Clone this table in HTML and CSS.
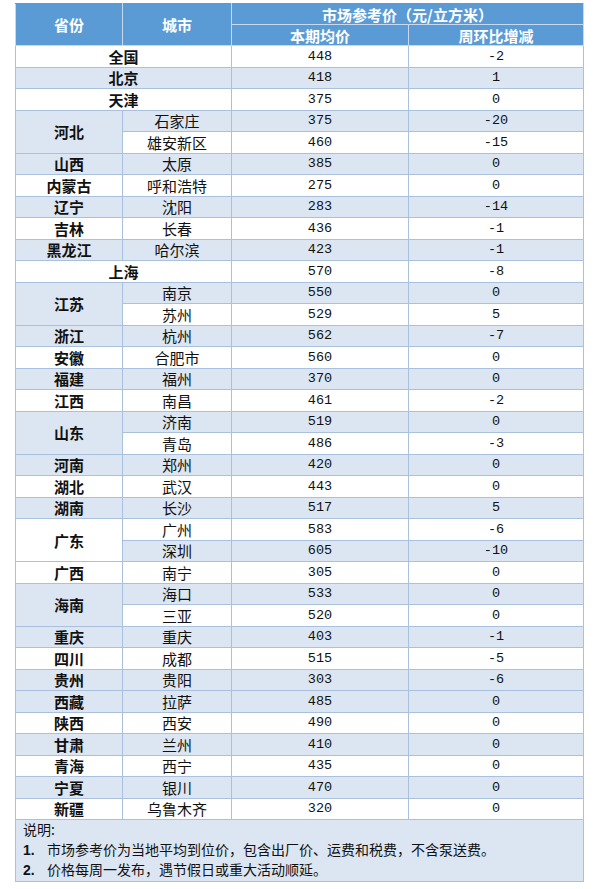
FILE: index.html
```html
<!DOCTYPE html>
<html lang="zh-CN">
<head>
<meta charset="utf-8">
<title>市场参考价</title>
<link rel="stylesheet" href="styles.css">
</head>
<body>
<div class="wrap">
<table class="price">
  <colgroup>
    <col class="c-prov"><col class="c-city"><col class="c-price"><col class="c-chg">
  </colgroup>
  <thead>
    <tr class="h1">
      <th rowspan="2">省份</th>
      <th rowspan="2">城市</th>
      <th colspan="2" class="h-group">市场参考价（元/立方米）</th>
    </tr>
    <tr class="h2">
      <th>本期均价</th>
      <th>周环比增减</th>
    </tr>
  </thead>
  <tbody>
    <tr class="w"><td class="prov" colspan="2">全国</td><td class="num">448</td><td class="num">-2</td></tr>
    <tr class="b"><td class="prov" colspan="2">北京</td><td class="num">418</td><td class="num">1</td></tr>
    <tr class="w"><td class="prov" colspan="2">天津</td><td class="num">375</td><td class="num">0</td></tr>
    <tr class="b"><td class="prov" rowspan="2">河北</td><td class="city">石家庄</td><td class="num">375</td><td class="num">-20</td></tr>
    <tr class="w"><td class="city">雄安新区</td><td class="num">460</td><td class="num">-15</td></tr>
    <tr class="b"><td class="prov">山西</td><td class="city">太原</td><td class="num">385</td><td class="num">0</td></tr>
    <tr class="w"><td class="prov">内蒙古</td><td class="city">呼和浩特</td><td class="num">275</td><td class="num">0</td></tr>
    <tr class="b"><td class="prov">辽宁</td><td class="city">沈阳</td><td class="num">283</td><td class="num">-14</td></tr>
    <tr class="w"><td class="prov">吉林</td><td class="city">长春</td><td class="num">436</td><td class="num">-1</td></tr>
    <tr class="b"><td class="prov">黑龙江</td><td class="city">哈尔滨</td><td class="num">423</td><td class="num">-1</td></tr>
    <tr class="w"><td class="prov" colspan="2">上海</td><td class="num">570</td><td class="num">-8</td></tr>
    <tr class="b"><td class="prov" rowspan="2">江苏</td><td class="city">南京</td><td class="num">550</td><td class="num">0</td></tr>
    <tr class="w"><td class="city">苏州</td><td class="num">529</td><td class="num">5</td></tr>
    <tr class="b"><td class="prov">浙江</td><td class="city">杭州</td><td class="num">562</td><td class="num">-7</td></tr>
    <tr class="w"><td class="prov">安徽</td><td class="city">合肥市</td><td class="num">560</td><td class="num">0</td></tr>
    <tr class="b"><td class="prov">福建</td><td class="city">福州</td><td class="num">370</td><td class="num">0</td></tr>
    <tr class="w"><td class="prov">江西</td><td class="city">南昌</td><td class="num">461</td><td class="num">-2</td></tr>
    <tr class="b"><td class="prov" rowspan="2">山东</td><td class="city">济南</td><td class="num">519</td><td class="num">0</td></tr>
    <tr class="w"><td class="city">青岛</td><td class="num">486</td><td class="num">-3</td></tr>
    <tr class="b"><td class="prov">河南</td><td class="city">郑州</td><td class="num">420</td><td class="num">0</td></tr>
    <tr class="w"><td class="prov">湖北</td><td class="city">武汉</td><td class="num">443</td><td class="num">0</td></tr>
    <tr class="b"><td class="prov">湖南</td><td class="city">长沙</td><td class="num">517</td><td class="num">5</td></tr>
    <tr class="w"><td class="prov" rowspan="2">广东</td><td class="city">广州</td><td class="num">583</td><td class="num">-6</td></tr>
    <tr class="b"><td class="city">深圳</td><td class="num">605</td><td class="num">-10</td></tr>
    <tr class="w"><td class="prov">广西</td><td class="city">南宁</td><td class="num">305</td><td class="num">0</td></tr>
    <tr class="b"><td class="prov" rowspan="2">海南</td><td class="city">海口</td><td class="num">533</td><td class="num">0</td></tr>
    <tr class="w"><td class="city">三亚</td><td class="num">520</td><td class="num">0</td></tr>
    <tr class="b"><td class="prov">重庆</td><td class="city">重庆</td><td class="num">403</td><td class="num">-1</td></tr>
    <tr class="w"><td class="prov">四川</td><td class="city">成都</td><td class="num">515</td><td class="num">-5</td></tr>
    <tr class="b"><td class="prov">贵州</td><td class="city">贵阳</td><td class="num">303</td><td class="num">-6</td></tr>
    <tr class="b"><td class="prov">西藏</td><td class="city">拉萨</td><td class="num">485</td><td class="num">0</td></tr>
    <tr class="w"><td class="prov">陕西</td><td class="city">西安</td><td class="num">490</td><td class="num">0</td></tr>
    <tr class="b"><td class="prov">甘肃</td><td class="city">兰州</td><td class="num">410</td><td class="num">0</td></tr>
    <tr class="w"><td class="prov">青海</td><td class="city">西宁</td><td class="num">435</td><td class="num">0</td></tr>
    <tr class="b"><td class="prov">宁夏</td><td class="city">银川</td><td class="num">470</td><td class="num">0</td></tr>
    <tr class="w"><td class="prov">新疆</td><td class="city">乌鲁木齐</td><td class="num">320</td><td class="num">0</td></tr>
  </tbody>
  <tfoot>
    <tr class="note">
      <td colspan="4">
        <div class="note-line">说明:</div>
        <div class="note-line"><span class="idx">1.</span>市场参考价为当地平均到位价，包含出厂价、运费和税费，不含泵送费。</div>
        <div class="note-line"><span class="idx">2.</span>价格每周一发布，遇节假日或重大活动顺延。</div>
      </td>
    </tr>
  </tfoot>
</table>
</div>
</body>
</html>
```
FILE: styles.css
```css
html, body {
  margin: 0;
  padding: 0;
  background: #ffffff;
}

.wrap {
  padding: 3px 0 0 15px;
}

.price {
  border-collapse: collapse;
  table-layout: fixed;
  width: 568px;
  font-family: "Noto Sans CJK SC", "Liberation Sans", sans-serif;
  font-size: 15px;
  color: #111111;
}

.c-prov { width: 107px; }
.c-city { width: 109px; }
.c-price { width: 177px; }
.c-chg { width: 175px; }

.price th,
.price td {
  padding: 0;
  line-height: 17px;
  text-align: center;
  vertical-align: middle;
  border: 1px solid #a9c1de;
}

.price thead th {
  background: #5b9bd5;
  color: #ffffff;
  font-weight: 700;
  border-color: #c7d9ee;
}

.price thead tr {
  height: 21px;
}

.price thead .h1 th {
  border-top-color: #5b9bd5;
}

.price tbody tr {
  height: 21.5px;
}

.price tr.w td { background: #ffffff; }
.price tr.b td { background: #dce6f2; }

.prov {
  font-weight: 700;
}

.city {
  font-weight: 400;
}

.num {
  font-family: "Liberation Mono", "DejaVu Sans Mono", monospace;
  font-size: 13.5px;
}

.price .note td {
  background: #dce6f2;
  text-align: left;
  padding: 0 0 0 7px;
  font-size: 14px;
}

.note-line {
  line-height: 19.5px;
  white-space: nowrap;
}

.idx {
  display: inline-block;
  width: 24px;
  font-weight: 700;
  font-family: "Liberation Sans", sans-serif;
}
```
